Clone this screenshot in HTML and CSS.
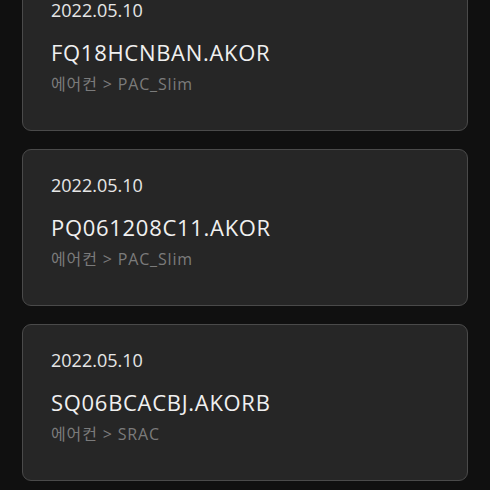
FILE: index.html
```html
<!DOCTYPE html>
<html lang="ko">
<head>
<meta charset="UTF-8">
<meta name="viewport" content="width=device-width, initial-scale=1.0">
<title>구매 이력</title>
<link rel="stylesheet" href="styles.css">
</head>
<body>
<ul class="history">
    <li class="card">
        <div class="date">2022.05.10</div>
        <div class="model">FQ18HCNBAN.AKOR</div>
        <div class="category">에어컨 &gt; PAC_Slim</div>
    </li>
    <li class="card">
        <div class="date">2022.05.10</div>
        <div class="model">PQ061208C11.AKOR</div>
        <div class="category">에어컨 &gt; PAC_Slim</div>
    </li>
    <li class="card">
        <div class="date">2022.05.10</div>
        <div class="model">SQ06BCACBJ.AKORB</div>
        <div class="category">에어컨 &gt; SRAC</div>
    </li>
</ul>
</body>
</html>
```

FILE: styles.css
```css
body {
    font-family: "Open Sans", "Noto Sans CJK KR", sans-serif;
    background-color: #101010;
    margin: 0;
    padding: 0;
    overflow: hidden;
}

.history {
    list-style: none;
    margin: -26px 0 0 0;
    padding: 0 22px;
    display: flex;
    flex-direction: column;
    gap: 18px;
}

.card {
    background-color: #262626;
    border: 1px solid #4a4a4a;
    border-radius: 9px;
    padding: 23px 28px 36px;
    display: flex;
    flex-direction: column;
}

.date {
    font-size: 18px;
    line-height: 24px;
    color: #e6e6e6;
}

.model {
    margin-top: 15px;
    font-size: 22px;
    line-height: 30px;
    letter-spacing: 0.7px;
    color: #f0f0f0;
}

.category {
    margin-top: 7px;
    font-size: 16px;
    line-height: 20px;
    letter-spacing: 0.85px;
    color: #7b7b7b;
}
```
